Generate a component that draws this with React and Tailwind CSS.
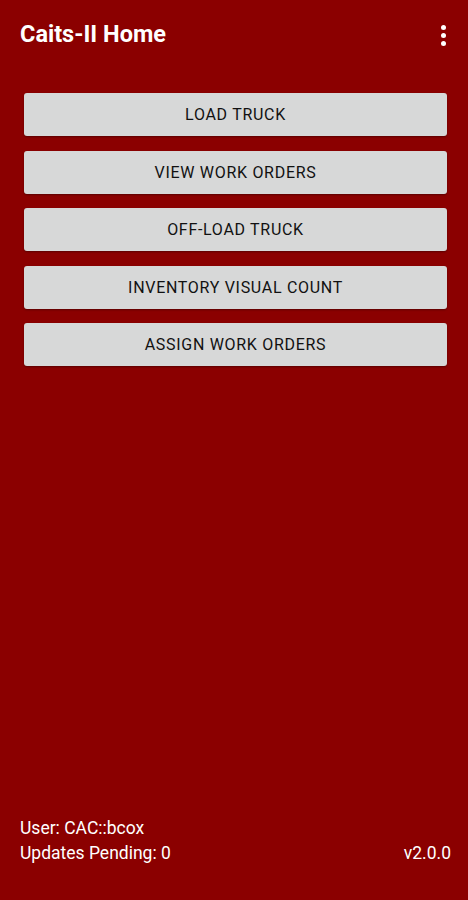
export default function App() {
  const items = ["LOAD TRUCK", "VIEW WORK ORDERS", "OFF-LOAD TRUCK", "INVENTORY VISUAL COUNT", "ASSIGN WORK ORDERS"];
  return (
    <div className="w-[468px] h-[900px] bg-[#8b0000] flex flex-col" style={{ fontFamily: "Roboto, 'Liberation Sans', sans-serif" }}>
      <div className="h-[70px] flex items-center justify-between pl-5 pr-[22px]">
        <div className="text-white text-[23.5px] font-bold">Caits-II Home</div>
        <div className="flex flex-col gap-[3px] items-center">
          <span className="w-[5px] h-[5px] rounded-full bg-white"></span>
          <span className="w-[5px] h-[5px] rounded-full bg-white"></span>
          <span className="w-[5px] h-[5px] rounded-full bg-white"></span>
        </div>
      </div>
      <div className="flex flex-col gap-[14.5px] pl-6 pr-[21px] pt-[23px]">
        {items.map((t) => (
          <div key={t} className="h-[43px] pt-[1px] rounded-[3px] bg-[#d7d8d8] shadow-[0_1px_2px_rgba(0,0,0,0.35)] flex items-center justify-center text-[16px] font-normal text-[#111111] tracking-[0.7px]">
            {t}
          </div>
        ))}
      </div>
      <div className="flex-1"></div>
      <div className="pl-5 pr-[17px] pb-[34px] text-white text-[17.5px] leading-[25px] flex justify-between items-end">
        <div>
          <div>User: CAC::bcox</div>
          <div>Updates Pending: 0</div>
        </div>
        <div>v2.0.0</div>
      </div>
    </div>
  );
}
